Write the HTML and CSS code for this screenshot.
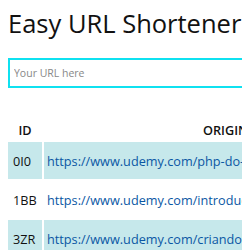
FILE: index.html
```html
<!DOCTYPE html>
<html lang="en">

<head>
	<meta charset="UTF-8" />
	<meta name="viewport" content="width=device-width, initial-scale=1.0" />
	<title>Easy URL Shortener</title>
	<link rel="stylesheet" href="styles.css">
</head>

<body>
	<div id="content">
		<h1>Easy URL Shortener</h1>
		<form class="shorten-form">
			<input type="text" id="url" name="url" placeholder="Your URL here" />
		</form>
		<table class="urls">
			<thead>
				<tr>
					<th class="col-id">ID</th>
					<th class="col-url">ORIGINAL URL</th>
				</tr>
			</thead>
			<tbody>
				<tr class="odd">
					<td class="col-id">0I0</td>
					<td><a href="#">https://www.udemy.com/php-do-basico-ao-avancado/</a></td>
				</tr>
				<tr>
					<td class="col-id">1BB</td>
					<td><a href="#">https://www.udemy.com/introducao-ao-javascript/</a></td>
				</tr>
				<tr class="odd">
					<td class="col-id">3ZR</td>
					<td><a href="#">https://www.udemy.com/criando-o-seu-primeiro-site/</a></td>
				</tr>
			</tbody>
		</table>
	</div>
</body>

</html>
```

FILE: styles.css
```css
body {
	margin: 8px;
	color: #111;
	font-family: "Open Sans", sans-serif;
	background-color: white;
}

#content {
	width: 560px;
}

h1 {
	margin: 0;
	font-size: 25.5px;
	font-weight: 400;
	line-height: 30px;
}

.shorten-form {
	margin-top: 20px;
}

#url {
	box-sizing: border-box;
	width: 100%;
	height: 30px;
	padding: 0 4px;
	border: 2px solid #0fe1f0;
	font-family: "Open Sans", sans-serif;
	font-size: 10.5px;
	color: #333;
	outline: none;
}

#url::placeholder {
	color: #888;
}

.urls {
	margin-top: 30px;
	margin-left: -2px;
	border-collapse: separate;
	border-spacing: 2px;
	font-size: 12.7px;
}

.urls th {
	height: 20px;
	padding: 0 4px;
	font-weight: 600;
	text-align: center;
}

.urls th.col-url {
	width: 398px;
}

.urls td {
	height: 37px;
	padding: 0 3px;
	white-space: nowrap;
}

.urls .col-id {
	width: 24px;
	padding: 0 5px;
	text-align: left;
}

.urls th.col-id {
	text-align: center;
}

.urls .odd td {
	background-color: #c6e8eb;
}

.urls a {
	color: #0b57a4;
	text-decoration: none;
}
```
